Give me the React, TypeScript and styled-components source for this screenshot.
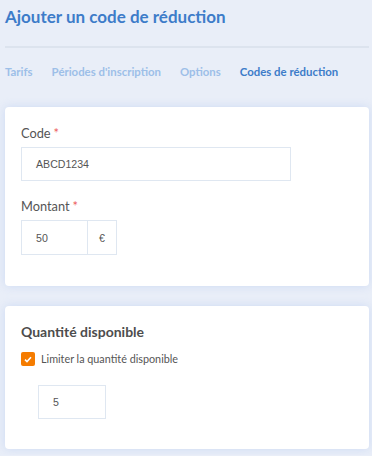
import React from 'react'
import styled, { createGlobalStyle } from 'styled-components'

const COLORS = {
  page: '#e9eef8',
  blue: '#3d7cc9',
  blueLight: '#9dbfe8',
  divider: '#dce3ee',
  text: '#555555',
  border: '#dfe7f1',
  red: '#ec5a5a',
  orange: '#f57c00',
}

const GlobalStyle = createGlobalStyle`
  body {
    margin: 0;
    background: ${COLORS.page};
    font-family: Lato, "Noto Sans", sans-serif;
  }
`

const StyledPage = styled.div`
  padding: 5px 3px 6px 5px;
`

const StyledTitle = styled.h1`
  margin: 0;
  font-size: 17px;
  line-height: 24px;
  font-weight: 700;
  color: ${COLORS.blue};
`

const StyledDivider = styled.div`
  height: 2px;
  margin-top: 17px;
  background: ${COLORS.divider};
`

const StyledTabs = styled.div`
  display: flex;
  gap: 19px;
  margin-top: 16px;
`

const StyledTab = styled.div<{ $active?: boolean }>`
  font-size: 11.4px;
  line-height: 16px;
  font-weight: 700;
  color: ${(p) => (p.$active ? COLORS.blue : COLORS.blueLight)};
`

const StyledCard = styled.div`
  margin-top: 27px;
  background: #fff;
  border-radius: 4px;
  box-shadow: 0 0 10px rgba(170, 195, 240, 0.45);
  padding: 17px 16px 31px;

  & + & {
    margin-top: 20px;
    padding: 16px 16px 30px;
  }
`

const StyledLabel = styled.div`
  font-size: 12.8px;
  line-height: 18px;
  font-weight: 400;
  color: ${COLORS.text};
  margin-bottom: 5px;

  & + * + & {
    margin-top: 16px;
  }
`

const StyledStar = styled.span`
  color: ${COLORS.red};
  margin-left: 3px;
`

const StyledInput = styled.div<{ $width: number }>`
  box-sizing: border-box;
  width: ${(p) => p.$width}px;
  height: 34px;
  border: 1px solid ${COLORS.border};
  display: flex;
  align-items: center;
  padding-left: 14px;
  font-family: "Liberation Sans", Arial, sans-serif;
  font-size: 10.6px;
  color: ${COLORS.text};
`

const StyledInputGroup = styled.div`
  display: flex;
  height: 35px;
  width: 96px;
  border: 1px solid ${COLORS.border};
  box-sizing: border-box;
  font-family: "Liberation Sans", Arial, sans-serif;
  font-size: 10.6px;
  color: ${COLORS.text};
`

const StyledGroupValue = styled.div`
  flex: 1;
  display: flex;
  align-items: center;
  padding-left: 14px;
`

const StyledAddon = styled.div`
  width: 28px;
  border-left: 1px solid ${COLORS.border};
  display: flex;
  align-items: center;
  justify-content: center;
`

const StyledHeading = styled.h2`
  margin: 0;
  font-size: 14px;
  line-height: 19px;
  font-weight: 700;
  color: #4d4d4d;
`

const StyledCheckRow = styled.label`
  display: flex;
  align-items: center;
  gap: 6px;
  margin-top: 10px;
  font-size: 10.8px;
  line-height: 16px;
  color: ${COLORS.text};
`

const StyledCheckbox = styled.span`
  width: 14px;
  height: 14px;
  border-radius: 2px;
  background: ${COLORS.orange};
  display: flex;
  align-items: center;
  justify-content: center;
`

const StyledQuantity = styled.div`
  margin: 18px 0 0 17px;
`

export default function App() {
  return (
    <StyledPage>
      <GlobalStyle />
      <StyledTitle>Ajouter un code de réduction</StyledTitle>
      <StyledDivider />
      <StyledTabs>
        <StyledTab>Tarifs</StyledTab>
        <StyledTab>Périodes d'inscription</StyledTab>
        <StyledTab>Options</StyledTab>
        <StyledTab $active>Codes de réduction</StyledTab>
      </StyledTabs>

      <StyledCard>
        <StyledLabel>
          Code<StyledStar>*</StyledStar>
        </StyledLabel>
        <StyledInput $width={270}>ABCD1234</StyledInput>
        <StyledLabel>
          Montant<StyledStar>*</StyledStar>
        </StyledLabel>
        <StyledInputGroup>
          <StyledGroupValue>50</StyledGroupValue>
          <StyledAddon>€</StyledAddon>
        </StyledInputGroup>
      </StyledCard>

      <StyledCard>
        <StyledHeading>Quantité disponible</StyledHeading>
        <StyledCheckRow>
          <StyledCheckbox>
            <svg width="8" height="7" viewBox="0 0 8 7">
              <path d="M1 3.6 L3 5.5 L7 1.2" fill="none" stroke="#fff" strokeWidth="1.6" />
            </svg>
          </StyledCheckbox>
          Limiter la quantité disponible
        </StyledCheckRow>
        <StyledQuantity>
          <StyledInput $width={68}>5</StyledInput>
        </StyledQuantity>
      </StyledCard>
    </StyledPage>
  )
}
